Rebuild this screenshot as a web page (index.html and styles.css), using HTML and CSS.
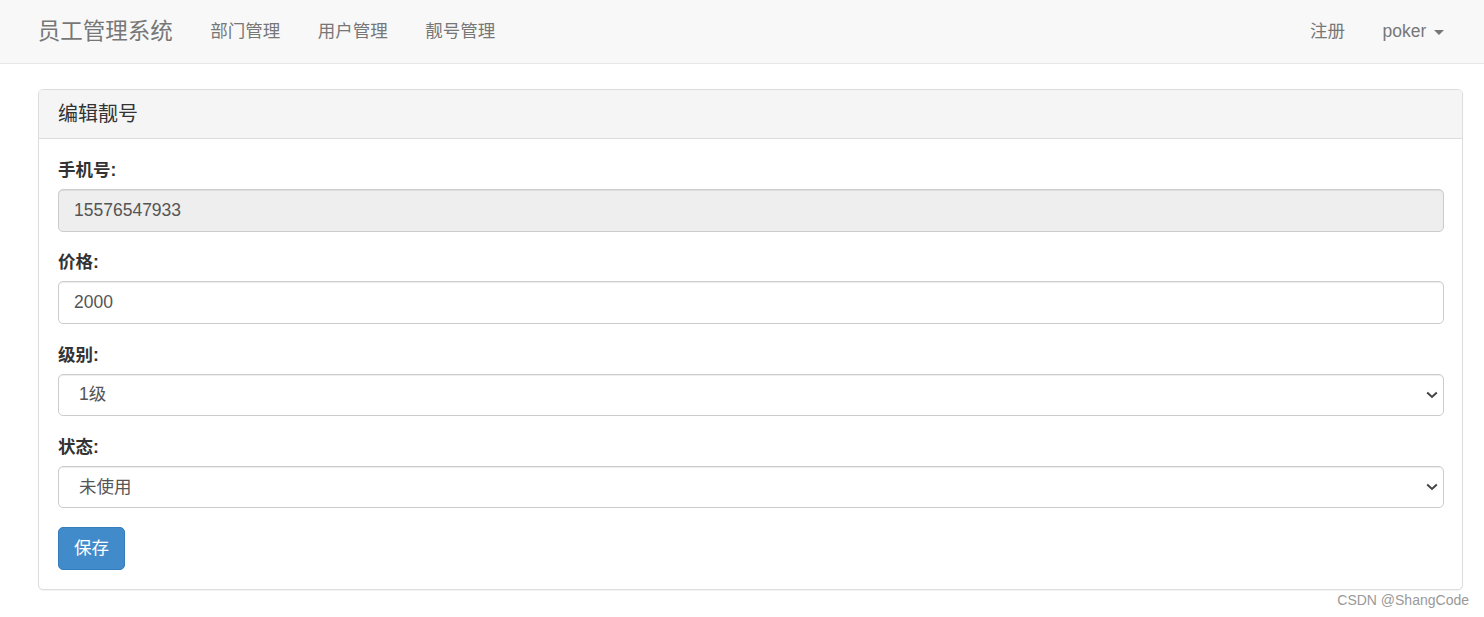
FILE: index.html
```html
<!DOCTYPE html>
<html lang="zh-CN">
<head>
<meta charset="utf-8">
<title>编辑靓号</title>
<link rel="stylesheet" href="styles.css">
</head>
<body>
<nav class="navbar">
  <div class="nav-inner">
    <a class="brand" href="#">员工管理系统</a>
    <ul class="nav-links">
      <li><a href="#">部门管理</a></li>
      <li><a href="#">用户管理</a></li>
      <li><a href="#">靓号管理</a></li>
    </ul>
    <ul class="nav-links nav-right">
      <li><a href="#">注册</a></li>
      <li><a href="#">poker <span class="caret"></span></a></li>
    </ul>
  </div>
</nav>
<main class="container">
  <div class="panel">
    <div class="panel-heading">编辑靓号</div>
    <div class="panel-body">
      <form>
        <div class="form-group">
          <label>手机号:</label>
          <input class="form-control" type="text" value="15576547933" disabled>
        </div>
        <div class="form-group">
          <label>价格:</label>
          <input class="form-control" type="text" value="2000">
        </div>
        <div class="form-group">
          <label>级别:</label>
          <div class="select-wrap">
            <select class="form-control form-select">
              <option>1级</option>
              <option>2级</option>
              <option>3级</option>
              <option>4级</option>
            </select>
            <svg class="chevron" width="12" height="8" viewBox="0 0 12 8"><path d="M1.2 1.5 L6 6 L10.8 1.5" fill="none" stroke="#444" stroke-width="2"/></svg>
          </div>
        </div>
        <div class="form-group">
          <label>状态:</label>
          <div class="select-wrap">
            <select class="form-control form-select">
              <option>未使用</option>
              <option>已占用</option>
            </select>
            <svg class="chevron" width="12" height="8" viewBox="0 0 12 8"><path d="M1.2 1.5 L6 6 L10.8 1.5" fill="none" stroke="#444" stroke-width="2"/></svg>
          </div>
        </div>
        <button type="button" class="btn">保存</button>
      </form>
    </div>
  </div>
</main>
<div class="watermark">CSDN @ShangCode</div>
</body>
</html>
```

FILE: styles.css
```css
* { box-sizing: border-box; }
html, body { margin: 0; padding: 0; }
body {
  font-family: "Liberation Sans", Arial, "Noto Sans CJK SC", sans-serif;
  font-size: 17.5px;
  line-height: 25px;
  color: #333;
  background: #fff;
  width: 1484px;
  height: 617px;
  position: relative;
  overflow: hidden;
}
a { text-decoration: none; }

.navbar {
  background: #f8f8f8;
  border-bottom: 1px solid #e7e7e7;
  height: 64px;
}
.nav-inner {
  display: flex;
  align-items: center;
  height: 63px;
  padding: 0 21px 0 19px;
}
.brand {
  color: #777;
  font-size: 22.5px;
  line-height: 25px;
  padding: 19px 18.75px;
}
.nav-links {
  list-style: none;
  margin: 0;
  padding: 0;
  display: flex;
}
.nav-links a {
  display: block;
  color: #777;
  padding: 19px 18.75px;
  line-height: 25px;
}
.nav-right { margin-left: auto; }
.caret {
  display: inline-block;
  width: 0;
  height: 0;
  margin-left: 3px;
  vertical-align: middle;
  border-top: 5px solid #777;
  border-left: 5px solid transparent;
  border-right: 5px solid transparent;
}

.container {
  padding: 25px 21px 0 38px;
}
.panel {
  border: 1px solid #ddd;
  border-radius: 5px;
  background: #fff;
  box-shadow: 0 1px 1px rgba(0,0,0,.05);
}
.panel-heading {
  background: #f5f5f5;
  border-bottom: 1px solid #ddd;
  border-radius: 4px 4px 0 0;
  color: #333;
  font-size: 20px;
  line-height: 24px;
  padding: 12px 19px;
}
.panel-body {
  padding: 19px 18.5px 19.5px 19px;
}
.form-group {
  margin-bottom: 18.75px;
}
.form-group label {
  display: block;
  font-weight: 700;
  margin-bottom: 6px;
}
.form-control {
  display: block;
  width: 100%;
  height: 42.5px;
  padding: 7.5px 15px;
  font-family: inherit;
  font-size: 17.5px;
  line-height: 25px;
  color: #555;
  background: #fff;
  border: 1px solid #ccc;
  border-radius: 5px;
  box-shadow: inset 0 1px 1px rgba(0,0,0,.075);
}
.form-control[disabled] {
  background: #eee;
  cursor: not-allowed;
}
.select-wrap {
  position: relative;
}
.form-select {
  -webkit-appearance: none;
  appearance: none;
  padding-left: 20px;
  padding-right: 36px;
}
.chevron {
  position: absolute;
  right: 6px;
  top: 17px;
  pointer-events: none;
}
.btn {
  display: inline-block;
  height: 42.5px;
  padding: 7.5px 15px;
  font-family: inherit;
  font-size: 17.5px;
  line-height: 25px;
  color: #fff;
  background: #428bca;
  border: 1px solid #357ebd;
  border-radius: 5px;
}

.watermark {
  position: absolute;
  right: 15px;
  bottom: 9px;
  font-size: 14px;
  line-height: 16px;
  color: #999;
}
```
